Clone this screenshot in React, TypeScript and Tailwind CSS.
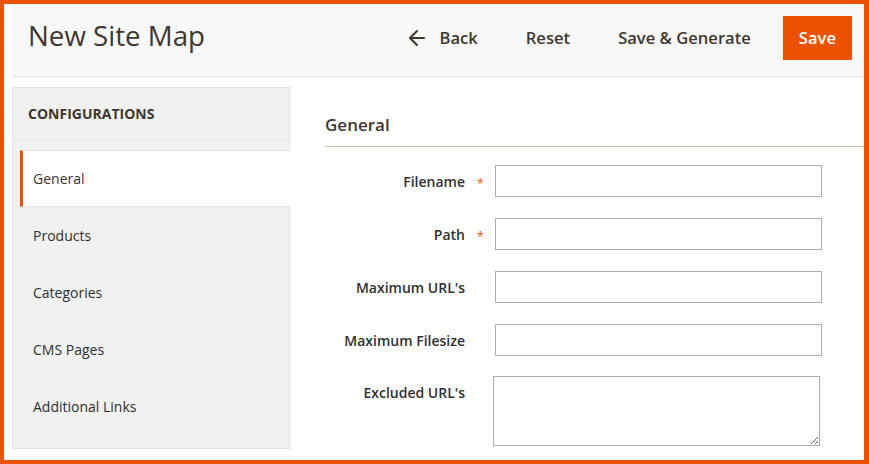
import { ArrowLeft } from "lucide-react";

const NAV = ["General", "Products", "Categories", "CMS Pages", "Additional Links"];

const FIELDS: { label: string; required?: boolean; textarea?: boolean }[] = [
  { label: "Filename", required: true },
  { label: "Path", required: true },
  { label: "Maximum URL's" },
  { label: "Maximum Filesize" },
  { label: "Excluded URL's", textarea: true },
];

function Header() {
  return (
    <div className="ml-2 flex h-[73px] items-start justify-between border-b border-[#e3e3e3] bg-[#f8f8f8] pl-4 pr-3 pt-3">
      <h1 className="-mt-[2px] flex h-11 items-center text-[27.7px] font-normal text-[#41362f]">New Site Map</h1>
      <div className="flex h-11 items-center text-[16.6px] font-semibold text-[#41362f]">
        <button type="button" className="flex h-11 items-center gap-[15px] px-4">
          <ArrowLeft size={24} strokeWidth={2} className="-ml-[5px] -mr-[5px]" />
          <span>Back</span>
        </button>
        <button type="button" className="ml-4 h-11 px-4">Reset</button>
        <button type="button" className="ml-4 h-11 px-4">Save &amp; Generate</button>
        <button type="button" className="ml-4 h-11 bg-[#eb5202] px-4 text-white">Save</button>
      </div>
    </div>
  );
}

function Sidebar() {
  return (
    <aside className="w-[278px] shrink-0 self-start border border-[#e3e3e3] bg-[#f1f1f1]">
      <div className="flex h-[52px] items-center border-b border-[#e3e3e3] px-[15px] text-sm font-bold uppercase text-[#41362f]">
        Configurations
      </div>
      <ul className="pb-[13px] pt-[10px]">
        {NAV.map((item, i) => (
          <li
            key={item}
            className={
              i === 0
                ? "-mr-px ml-[7px] flex h-[57px] items-center border-y border-l-[3px] border-[#e3e3e3] border-l-[#eb5202] bg-white pl-[10px] text-sm text-[#41362f]"
                : "ml-[7px] flex h-[57px] items-center border-y border-l-[3px] border-transparent pl-[10px] text-sm text-[#303030]"
            }
          >
            {item}
          </li>
        ))}
      </ul>
    </aside>
  );
}

function Form() {
  return (
    <section className="ml-[35px] flex-1 pt-[17px]">
      <div className="flex h-[43px] items-center border-b border-[#cac3b4] text-[17px] font-semibold text-[#41362f]">
        General
      </div>
      <div className="mt-[18px] flex flex-col gap-[21px]">
        {FIELDS.map((f) => (
          <div key={f.label} className={f.textarea ? "flex items-start" : "flex items-center"}>
            <label
              className={
                f.textarea
                  ? "relative w-[170px] shrink-0 pr-[30px] pt-[6px] text-right text-sm font-semibold text-[#303030]"
                  : "relative w-[170px] shrink-0 pr-[30px] pt-px text-right text-sm font-semibold text-[#303030]"
              }
            >
              {f.label}
              {f.required && (
                <span className="absolute right-[11px] top-[3px] text-[13px] font-normal text-[#eb5202]">*</span>
              )}
            </label>
            {f.textarea ? (
              <textarea className="-ml-[2px] -mt-px h-[70px] w-[327px] border border-[#adadad] bg-white" />
            ) : (
              <input type="text" className="h-8 w-[327px] border border-[#adadad] bg-white" />
            )}
          </div>
        ))}
      </div>
    </section>
  );
}

export default function App() {
  return (
    <div
      className="h-[464px] w-[869px] overflow-hidden border-b-[4px] border-l-4 border-r-[5px] border-t-4 border-[#eb5202] bg-white"
      style={{ fontFamily: '"Open Sans", "Noto Sans", sans-serif' }}
    >
      <Header />
      <div className="ml-2 mt-[10px] flex">
        <Sidebar />
        <Form />
      </div>
    </div>
  );
}
